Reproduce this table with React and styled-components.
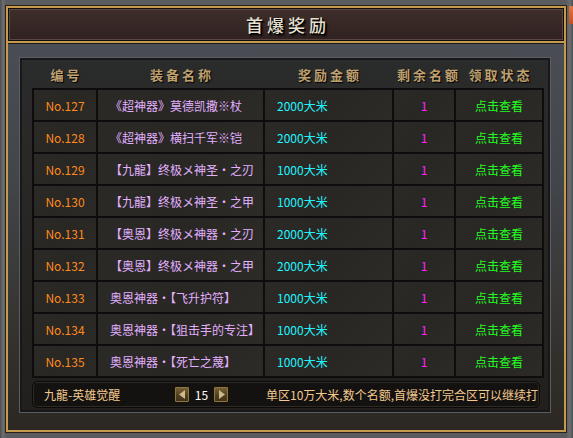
import React from "react";
import styled, { createGlobalStyle } from "styled-components";

const Global = createGlobalStyle`
  html, body { margin: 0; padding: 0; background: #58595b; }
  body { font-family: "Noto Sans CJK SC", "Noto Sans", sans-serif; }
  * { box-sizing: border-box; }
`;

const Outer = styled.div`
  position: relative;
  width: 573px;
  height: 438px;
  padding: 6px 7px 6px 6px;
  background: linear-gradient(to right, #4c4d50 0px, #6d6e71 3px, #5a5b5e 6px, #5a5b5e 566px, #6d6e71 570px, #4c4d50 573px);
  overflow: hidden;
`;

const CornerTab = styled.div`
  position: absolute;
  right: 0;
  top: 6px;
  width: 4px;
  height: 18px;
  background: linear-gradient(#e8743a, #c4501e);
`;

const Frame = styled.div`
  height: 100%;
  display: flex;
  flex-direction: column;
  border: 2px solid #c39a4e;
  box-shadow: 0 0 0 1px #2a2016;
`;

const TitleBar = styled.div`
  height: 35px;
  flex: none;
  display: flex;
  align-items: center;
  justify-content: center;
  border-bottom: 2px solid #c39a4e;
  background: #120c0a;
  padding: 1px;
`;

const TitleInner = styled.div`
  width: 100%;
  height: 100%;
  display: flex;
  align-items: center;
  justify-content: center;
  border: 1px solid #5b4641;
  background: linear-gradient(#3f2e2a, #362724 60%, #2e2120);
`;

const Title = styled.h1`
  margin: 0;
  font-family: "Noto Sans CJK SC", serif;
  font-size: 17px;
  font-weight: 500;
  letter-spacing: 4px;
  padding-left: 4px;
  color: #e6e0d2;
  text-shadow: 1px 1px 0 #000, 2px 2px 2px #000;
`;

const Body = styled.div`
  flex: 1;
  padding: 15px 15px 18px 12px;
  background: linear-gradient(to bottom, #4a4e54 0%, #42454a 35%, #35332f 75%, #2c2723 100%);
  box-shadow: inset 0 1px 0 #1b1b1d;
  display: flex;
`;

const Panel = styled.div`
  flex: 1;
  display: flex;
  flex-direction: column;
  padding: 0 4px 0 10px;
  background: linear-gradient(#2a2b2b, #262522 60%, #221f1c);
  border: 2px solid #18181a;
  box-shadow: 0 0 0 1px #5a5e63;
`;

const cols = "62px 165px 127px 60px 86px";

const HeaderRow = styled.div`
  display: grid;
  grid-template-columns: ${cols};
  column-gap: 2px;
  padding: 0 2px;
  height: 28px;
  align-items: center;
`;

const HeaderCell = styled.div`
  text-align: center;
  font-family: "Noto Sans CJK SC", serif;
  font-size: 13px;
  font-weight: 700;
  letter-spacing: 3px;
  padding-left: 3px;
  color: #bfa06e;
  text-shadow: 1px 1px 1px #000;
  white-space: nowrap;
`;

const Table = styled.div`
  display: grid;
  grid-template-columns: ${cols};
  grid-auto-rows: 30px;
  gap: 2px;
  padding: 2px;
  width: 512px;
  background: #0d0d0d;
`;

const Cell = styled.div`
  display: flex;
  align-items: center;
  justify-content: ${(p) => (p.$left ? "flex-start" : "center")};
  padding-left: ${(p) => (p.$left ? "12px" : "0")};
  background: linear-gradient(135deg, #2b2a27, #282724 50%, #2c2b28);
  font-size: 12px;
  color: ${(p) => p.$color};
  white-space: nowrap;
  overflow: hidden;
`;

const Footer = styled.div`
  margin: 4px 0 0 1px;
  width: 506px;
  height: 25px;
  display: flex;
  align-items: center;
  padding: 0 0 0 10px;
  background: #141211;
  border: 1px solid #2e2a26;
  border-radius: 5px;
  box-shadow: 0 0 0 1px #0b0a09;
  font-size: 12px;
  color: #f2c98e;
`;

const ServerName = styled.span`
  width: 130px;
  white-space: nowrap;
`;

const Pager = styled.div`
  display: flex;
  align-items: center;
  width: 92px;
`;

const ArrowBtn = styled.div`
  width: 16px;
  height: 17px;
  display: flex;
  align-items: center;
  justify-content: center;
  border: 1px solid #171107;
  border-radius: 2px;
  background: linear-gradient(#7a6438, #4f3d1e 60%, #3d2f17);
  box-shadow: inset 0 0 0 1px #8d7645;
`;

const PageNum = styled.span`
  width: 23px;
  text-align: center;
  color: #ffffff;
  font-size: 12px;
`;

const Note = styled.span`
  white-space: nowrap;
`;

const rows = [
  ["No.127", "《超神器》莫德凯撒※杖", "2000大米"],
  ["No.128", "《超神器》横扫千军※铠", "2000大米"],
  ["No.129", "【九龍】终极メ神圣・之刃", "1000大米"],
  ["No.130", "【九龍】终极メ神圣・之甲", "1000大米"],
  ["No.131", "【奥恩】终极メ神器・之刃", "2000大米"],
  ["No.132", "【奥恩】终极メ神器・之甲", "2000大米"],
  ["No.133", "奥恩神器・【飞升护符】", "1000大米"],
  ["No.134", "奥恩神器・【狙击手的专注】", "1000大米"],
  ["No.135", "奥恩神器・【死亡之蔑】", "1000大米"],
];

const Tri = ({ dir }) => (
  <svg width="7" height="9" viewBox="0 0 7 9">
    {dir === "left" ? (
      <polygon points="6,0 6,9 0,4.5" fill="#cdb98a" />
    ) : (
      <polygon points="1,0 1,9 7,4.5" fill="#cdb98a" />
    )}
  </svg>
);

export default function App() {
  return (
    <>
      <Global />
      <Outer>
        <CornerTab />
        <Frame>
          <TitleBar>
            <TitleInner>
              <Title>首爆奖励</Title>
            </TitleInner>
          </TitleBar>
          <Body>
            <Panel>
              <HeaderRow>
                <HeaderCell>编号</HeaderCell>
                <HeaderCell>装备名称</HeaderCell>
                <HeaderCell>奖励金额</HeaderCell>
                <HeaderCell>剩余名额</HeaderCell>
                <HeaderCell>领取状态</HeaderCell>
              </HeaderRow>
              <Table>
                {rows.map(([no, name, amt]) => (
                  <React.Fragment key={no}>
                    <Cell $color="#ff8a1a">{no}</Cell>
                    <Cell $left $color="#e2b0ff">{name}</Cell>
                    <Cell $left $color="#22f4ff">{amt}</Cell>
                    <Cell $color="#ff22ff">1</Cell>
                    <Cell $color="#22ff22">点击查看</Cell>
                  </React.Fragment>
                ))}
              </Table>
              <Footer>
                <ServerName>九龍-英雄觉醒</ServerName>
                <Pager>
                  <ArrowBtn>
                    <Tri dir="left" />
                  </ArrowBtn>
                  <PageNum>15</PageNum>
                  <ArrowBtn>
                    <Tri dir="right" />
                  </ArrowBtn>
                </Pager>
                <Note>单区10万大米,数个名额,首爆没打完合区可以继续打</Note>
              </Footer>
            </Panel>
          </Body>
        </Frame>
      </Outer>
    </>
  );
}
